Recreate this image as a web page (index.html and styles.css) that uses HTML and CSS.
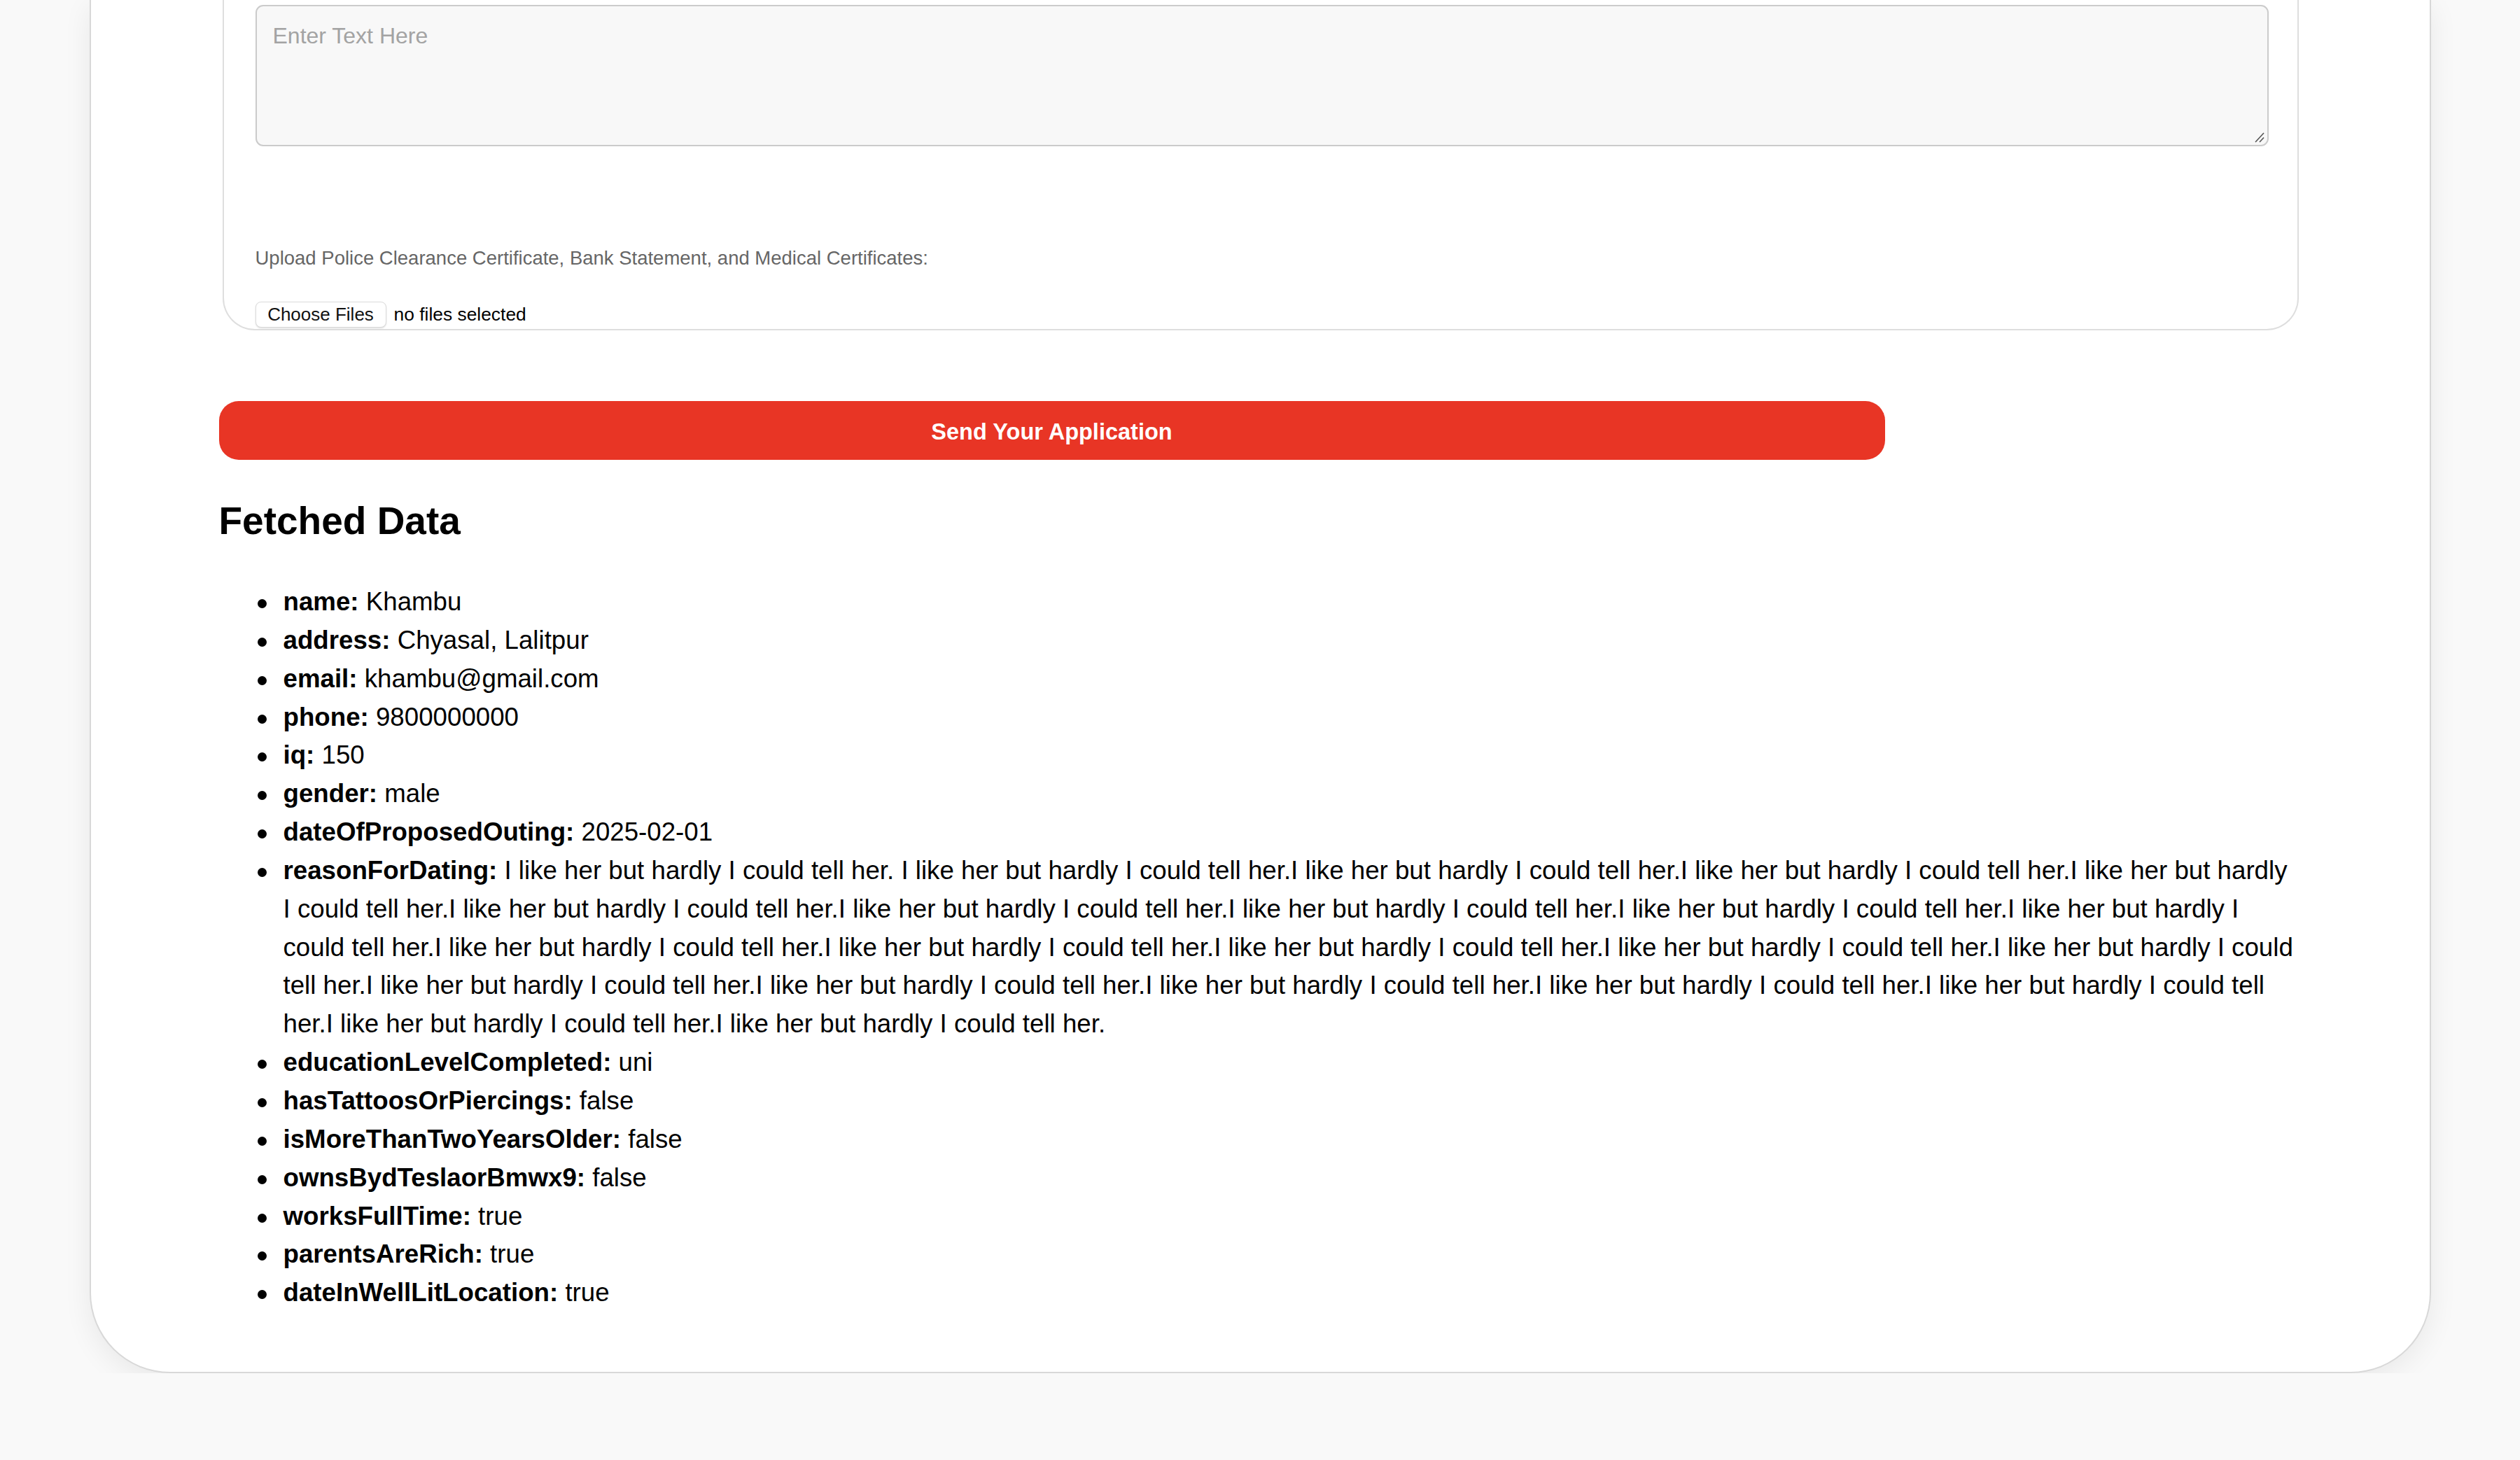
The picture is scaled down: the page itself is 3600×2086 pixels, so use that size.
FILE: index.html
```html
<!DOCTYPE html>
<html lang="en">
<head>
<meta charset="utf-8">
<title>Application</title>
<link rel="stylesheet" href="styles.css">
</head>
<body>
<main class="page">
  <section class="card">
    <div class="textarea-wrap">
      <textarea class="textarea" placeholder="Enter Text Here"></textarea>
      <svg class="grip" width="16" height="16" viewBox="0 0 16 16" aria-hidden="true">
        <line x1="2" y1="15" x2="14" y2="2" stroke="#555" stroke-width="1.6"/>
        <line x1="8" y1="15" x2="14" y2="8.5" stroke="#555" stroke-width="1.6"/>
      </svg>
    </div>
    <label class="upload-label">Upload Police Clearance Certificate, Bank Statement, and Medical Certificates:</label>
    <div class="file-row">
      <button class="file-btn" type="button">Choose Files</button>
      <span class="file-status">no files selected</span>
    </div>
  </section>

  <button class="submit" type="button">Send Your Application</button>

  <h2 class="title">Fetched Data</h2>
  <ul class="data-list">
    <li><strong>name:</strong> Khambu</li>
    <li><strong>address:</strong> Chyasal, Lalitpur</li>
    <li><strong>email:</strong> khambu@gmail.com</li>
    <li><strong>phone:</strong> 9800000000</li>
    <li><strong>iq:</strong> 150</li>
    <li><strong>gender:</strong> male</li>
    <li><strong>dateOfProposedOuting:</strong> 2025-02-01</li>
    <li><strong>reasonForDating:</strong> I like her but hardly I could tell her. I like her but hardly I could tell her.I like her but hardly I could tell her.I like her but hardly I could tell her.I like her but hardly I could tell her.I like her but hardly I could tell her.I like her but hardly I could tell her.I like her but hardly I could tell her.I like her but hardly I could tell her.I like her but hardly I could tell her.I like her but hardly I could tell her.I like her but hardly I could tell her.I like her but hardly I could tell her.I like her but hardly I could tell her.I like her but hardly I could tell her.I like her but hardly I could tell her.I like her but hardly I could tell her.I like her but hardly I could tell her.I like her but hardly I could tell her.I like her but hardly I could tell her.I like her but hardly I could tell her.I like her but hardly I could tell her.</li>
    <li><strong>educationLevelCompleted:</strong> uni</li>
    <li><strong>hasTattoosOrPiercings:</strong> false</li>
    <li><strong>isMoreThanTwoYearsOlder:</strong> false</li>
    <li><strong>ownsBydTeslaorBmwx9:</strong> false</li>
    <li><strong>worksFullTime:</strong> true</li>
    <li><strong>parentsAreRich:</strong> true</li>
    <li><strong>dateInWellLitLocation:</strong> true</li>
  </ul>
</main>
</body>
</html>
```

FILE: styles.css
```css
html, body {
  margin: 0;
  padding: 0;
}

body {
  background: #f9f9f9;
  font-family: "Liberation Sans", Arial, Helvetica, sans-serif;
  color: #000;
}

.page {
  box-sizing: border-box;
  width: 3345px;
  margin: 0 auto;
  background: #fff;
  border: 2px solid #d8d8d8;
  border-top: none;
  border-radius: 0 0 115px 115px;
  box-shadow: 0 10px 40px rgba(0, 0, 0, 0.07);
  padding: 0 183px 85px;
}

.card {
  margin: 0 4px 0 5px;
  border: 2px solid #dedede;
  border-top: none;
  border-radius: 0 0 46px 46px;
  padding: 7px 41px 2px 45px;
}

.textarea-wrap {
  position: relative;
}

.textarea {
  display: block;
  box-sizing: border-box;
  width: 100%;
  height: 202px;
  margin: 0;
  border: 2px solid #cbcbcb;
  border-radius: 11px;
  background: #f8f8f8;
  padding: 24px 23px 20px;
  font-family: "Liberation Sans", Arial, Helvetica, sans-serif;
  font-size: 32px;
  resize: none;
  outline: none;
}

.textarea::placeholder {
  color: #a3a3a3;
}

.grip {
  position: absolute;
  right: 5px;
  bottom: 5px;
}

.upload-label {
  display: block;
  margin-top: 144px;
  font-size: 27.5px;
  color: #666;
}

.file-row {
  display: flex;
  align-items: center;
  gap: 11px;
  margin-top: 46px;
}

.file-btn {
  box-sizing: border-box;
  height: 37px;
  width: 187px;
  padding: 0;
  background: #fff;
  border: 1px solid #dcdcdc;
  border-radius: 8px;
  box-shadow: 0 1px 2px rgba(0, 0, 0, 0.15);
  font-family: "Liberation Sans", Arial, Helvetica, sans-serif;
  font-size: 26px;
  color: #111;
}

.file-status {
  font-size: 26.4px;
  color: #000;
}

.submit {
  display: block;
  box-sizing: border-box;
  width: 80%;
  height: 84px;
  margin-top: 101px;
  border: none;
  border-radius: 28px;
  background: #e83525;
  color: #fff;
  font-family: "Liberation Sans", Arial, Helvetica, sans-serif;
  font-weight: bold;
  font-size: 32.5px;
  padding-top: 5px;
}

.title {
  margin: 55px 0 57px;
  font-size: 55px;
  font-weight: bold;
  line-height: normal;
}

.data-list {
  margin: 0;
  padding-left: 92px;
  list-style: none;
  font-size: 36.7px;
  line-height: 54.85px;
}

.data-list li {
  position: relative;
}

.data-list li::before {
  content: "";
  position: absolute;
  left: -37px;
  top: 23px;
  width: 13px;
  height: 13px;
  border-radius: 50%;
  background: #000;
}

.data-list strong {
  font-weight: bold;
}
```
